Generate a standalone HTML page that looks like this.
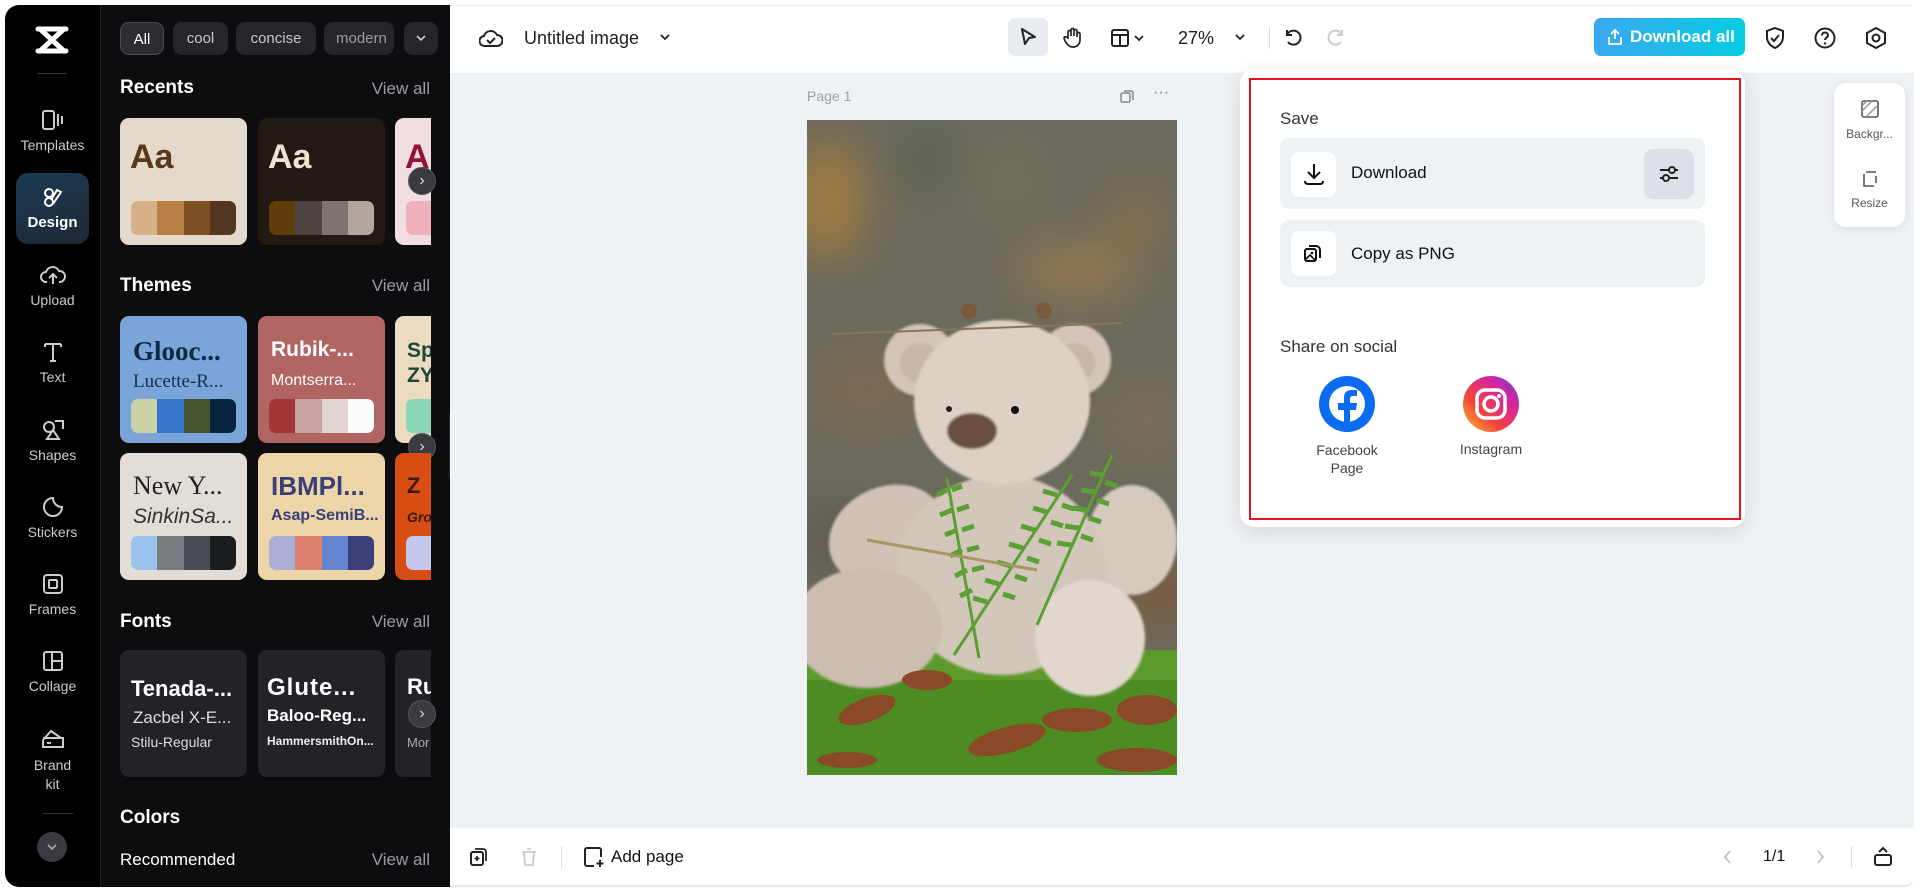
<!DOCTYPE html>
<html><head><meta charset="utf-8"><style>
*{box-sizing:border-box;margin:0;padding:0}
body{width:1920px;height:893px;overflow:hidden;background:#fff;font-family:"Liberation Sans",sans-serif;position:relative}
.a{position:absolute}
.rail{left:5px;top:5px;width:95px;height:882px;background:#000;border-radius:14px 0 0 14px}
.panel{left:100px;top:5px;width:350px;height:882px;background:#0d0d0f;border-left:1px solid #1e1e22}
.ri{position:absolute;left:0;width:95px;text-align:center;color:#c9cbd0;font-size:14px}
.ri svg{display:block;margin:0 auto 6px}
.chip{position:absolute;top:22px;height:33px;border-radius:9px;background:#25262a;color:#c5c7cc;font-size:15px;line-height:33px;text-align:center}
.ttl{position:absolute;left:120px;color:#fff;font-weight:bold;font-size:19px}
.va{position:absolute;right:1490px;color:#9a9ca3;font-size:17px}
.card{position:absolute;width:127px;height:127px;border-radius:9px;overflow:hidden}
.sw{position:absolute;left:11px;right:11px;bottom:10px;height:34px;border-radius:7px;overflow:hidden;display:flex}
.sw i{flex:1}
.arr{position:absolute;width:28px;height:28px;border-radius:50%;background:#3a3b40;border:1px solid #55565c;color:#ddd;font-size:16px;line-height:25px;text-align:center}
.tb{color:#1d1e22}
</style></head><body>
<div class="a rail">
  <svg class="a" style="left:30px;top:20px" width="34" height="30" viewBox="0 0 34 30"><path d="M3 4h28M3 26h28M5 4l24 22M29 4L5 26" stroke="#fff" stroke-width="5" fill="none" stroke-linecap="round"/></svg>
  <div class="a" style="left:32px;top:68px;width:30px;height:1px;background:#333"></div>
  <div class="ri" style="top:104px"><svg width="24" height="22" viewBox="0 0 24 22"><rect x="2" y="2" width="11" height="18" rx="2" fill="none" stroke="#ccc" stroke-width="2"/><path d="M17 5v12M21 7v8" stroke="#ccc" stroke-width="2"/></svg>Templates</div>
  <div class="a" style="left:11px;top:168px;width:73px;height:71px;border-radius:12px;background:linear-gradient(160deg,#1b3a55,#1e2833)"></div>
  <div class="ri" style="top:181px;color:#fff;font-weight:bold;font-size:15px"><svg width="24" height="22" viewBox="0 0 24 22"><circle cx="8" cy="7" r="4" fill="none" stroke="#fff" stroke-width="2"/><circle cx="8" cy="16" r="4" fill="none" stroke="#fff" stroke-width="2"/><path d="M12 18l8-12-4-2-6 10" fill="none" stroke="#fff" stroke-width="2"/></svg>Design</div>
  <div class="ri" style="top:259px"><svg width="26" height="22" viewBox="0 0 26 22"><path d="M7 18H6a5 5 0 010-10 7 7 0 0113-1 5 5 0 011 11h-1M13 20v-9M9 14l4-4 4 4" fill="none" stroke="#ccc" stroke-width="2"/></svg>Upload</div>
  <div class="ri" style="top:336px"><svg width="24" height="22" viewBox="0 0 24 22"><path d="M4 3h16M12 3v17M4 3v3M20 3v3M9 20h6" stroke="#ccc" stroke-width="2" fill="none"/></svg>Text</div>
  <div class="ri" style="top:414px"><svg width="24" height="22" viewBox="0 0 24 22"><circle cx="8" cy="8" r="5" fill="none" stroke="#ccc" stroke-width="2"/><path d="M14 2h8v8M6 20l6-9 6 9z" fill="none" stroke="#ccc" stroke-width="2"/></svg>Shapes</div>
  <div class="ri" style="top:491px"><svg width="24" height="22" viewBox="0 0 24 22"><path d="M12 2a9 9 0 109 9c-5 0-9-4-9-9z" fill="none" stroke="#ccc" stroke-width="2"/></svg>Stickers</div>
  <div class="ri" style="top:568px"><svg width="24" height="22" viewBox="0 0 24 22"><rect x="3" y="2" width="18" height="18" rx="3" fill="none" stroke="#ccc" stroke-width="2"/><rect x="8" y="7" width="8" height="8" rx="1" fill="none" stroke="#ccc" stroke-width="2"/></svg>Frames</div>
  <div class="ri" style="top:645px"><svg width="24" height="22" viewBox="0 0 24 22"><rect x="3" y="2" width="18" height="18" rx="2" fill="none" stroke="#ccc" stroke-width="2"/><path d="M11 2v18M11 11h10" stroke="#ccc" stroke-width="2"/></svg>Collage</div>
  <div class="ri" style="top:723px;line-height:19px"><svg width="26" height="22" viewBox="0 0 26 22"><path d="M3 12l8-9 10 7M3 12v7h20v-9H3" fill="none" stroke="#ccc" stroke-width="2"/><path d="M7 15h4" stroke="#ccc" stroke-width="2"/></svg>Brand<br>kit</div>
  <div class="a" style="left:38px;top:808px;width:30px;height:1px;background:#333"></div>
  <div class="a" style="left:32px;top:827px;width:30px;height:30px;border-radius:50%;background:#3a3b40"></div>
  <svg class="a" style="left:40px;top:836px" width="14" height="12" viewBox="0 0 14 12"><path d="M3 4l4 4 4-4" fill="none" stroke="#aaa" stroke-width="1.6"/></svg>
</div>
<div class="a panel"></div>
<div class="chip" style="left:120px;width:44px;background:#2c2d31;border:1px solid #4a4b50;color:#fff">All</div>
<div class="chip" style="left:173px;width:55px">cool</div>
<div class="chip" style="left:236px;width:80px">concise</div>
<div class="chip" style="left:324px;width:70px;text-align:left;padding-left:12px;overflow:hidden;color:#9a9ca3">modern</div>
<div class="chip" style="left:404px;width:34px"></div>
<svg class="a" style="left:414px;top:32px" width="14" height="12" viewBox="0 0 14 12"><path d="M3 4l4 4 4-4" fill="none" stroke="#ccc" stroke-width="1.6"/></svg>
<div class="ttl" style="top:77px">Recents</div><div class="va" style="top:79px">View all</div>
<div class="card" style="left:120px;top:118px;background:#e5d9cd"><div class="a" style="left:10px;top:20px;font-size:34px;font-weight:bold;color:#5a3719">Aa</div><div class="sw"><i style="background:#d6b189"></i><i style="background:#b98146"></i><i style="background:#7f4f24"></i><i style="background:#533520"></i></div></div>
<div class="card" style="left:258px;top:118px;background:#211a13"><div class="a" style="left:10px;top:20px;font-size:34px;font-weight:bold;color:#ede2d4">Aa</div><div class="sw"><i style="background:#603c09"></i><i style="background:#4c4440"></i><i style="background:#7d746e"></i><i style="background:#b1a79f"></i></div></div>
<div class="card" style="left:395px;top:118px;width:36px;background:#f2dde1;border-radius:9px 0 0 9px"><div class="a" style="left:10px;top:20px;font-size:34px;font-weight:bold;color:#8f1634">A</div><div class="sw" style="right:0;border-radius:7px 0 0 7px"><i style="background:#eeb0bb"></i></div></div>
<div class="arr" style="left:408px;top:167px">›</div>
<div class="ttl" style="top:275px">Themes</div><div class="va" style="top:276px">View all</div>
<div class="card" style="left:120px;top:316px;background:#7ba4d9"><div class="a" style="left:13px;top:20px;font-size:27px;font-weight:bold;font-family:'Liberation Serif',serif;color:#0e2a40">Glooc...</div><div class="a" style="left:13px;top:55px;font-size:19px;font-family:'Liberation Serif',serif;color:#17324a">Lucette-R...</div><div class="sw"><i style="background:#cbd3a6"></i><i style="background:#3576c9"></i><i style="background:#485531"></i><i style="background:#07243f"></i></div></div>
<div class="card" style="left:258px;top:316px;background:#b16563"><div class="a" style="left:13px;top:22px;font-size:21px;font-weight:bold;color:#fff">Rubik-...</div><div class="a" style="left:13px;top:56px;font-size:16px;color:#fff">Montserra...</div><div class="sw"><i style="background:#a53435"></i><i style="background:#c8a3a3"></i><i style="background:#e1d5d3"></i><i style="background:#fbfdfd"></i></div></div>
<div class="card" style="left:395px;top:316px;width:36px;background:#ebdcc1;border-radius:9px 0 0 9px"><div class="a" style="left:12px;top:22px;font-size:21px;font-weight:bold;color:#1f4536;line-height:25px">Sp<br>ZY</div><div class="sw" style="right:0;border-radius:7px 0 0 7px"><i style="background:#87d7b6"></i></div></div>
<div class="arr" style="left:408px;top:433px">›</div>
<div class="card" style="left:120px;top:453px;background:#e2ddd7"><div class="a" style="left:13px;top:18px;font-size:26px;font-family:'Liberation Serif',serif;color:#222">New Y...</div><div class="a" style="left:13px;top:52px;font-size:21px;font-style:italic;color:#333">SinkinSa...</div><div class="sw"><i style="background:#9ac4ed"></i><i style="background:#777a7e"></i><i style="background:#484b52"></i><i style="background:#1a1c20"></i></div></div>
<div class="card" style="left:258px;top:453px;background:#ecd6a9"><div class="a" style="left:13px;top:18px;font-size:26px;font-weight:bold;color:#3a3f78">IBMPl...</div><div class="a" style="left:13px;top:54px;font-size:16px;font-weight:bold;color:#3a3f78">Asap-SemiB...</div><div class="sw"><i style="background:#abafd6"></i><i style="background:#dd8070"></i><i style="background:#6685d0"></i><i style="background:#3c407a"></i></div></div>
<div class="card" style="left:395px;top:453px;width:36px;background:#d84d12;border-radius:9px 0 0 9px"><div class="a" style="left:12px;top:20px;font-size:22px;font-weight:bold;color:#3a1a10">Z</div><div class="a" style="left:12px;top:56px;font-size:14px;font-weight:bold;font-style:italic;color:#3a1a10">Gro</div><div class="sw" style="right:0;border-radius:7px 0 0 7px"><i style="background:#c5c8ee"></i></div></div>
<div class="ttl" style="top:611px">Fonts</div><div class="va" style="top:612px">View all</div>
<div class="card" style="left:120px;top:650px;background:#222327"><div class="a" style="left:11px;top:26px;font-size:22px;font-weight:bold;color:#fff">Tenada-...</div><div class="a" style="left:13px;top:58px;font-size:17px;color:#ddd">Zacbel X-E...</div><div class="a" style="left:11px;top:84px;font-size:14px;color:#ddd">Stilu-Regular</div></div>
<div class="card" style="left:258px;top:650px;background:#222327"><div class="a" style="left:9px;top:24px;font-size:24px;font-weight:bold;color:#fff;letter-spacing:1px">Glute...</div><div class="a" style="left:9px;top:56px;font-size:17px;font-weight:bold;color:#fff">Baloo-Reg...</div><div class="a" style="left:9px;top:84px;font-size:12px;color:#eee;font-weight:bold">HammersmithOn...</div></div>
<div class="card" style="left:395px;top:650px;width:36px;background:#222327;border-radius:9px 0 0 9px"><div class="a" style="left:12px;top:24px;font-size:22px;font-weight:bold;color:#fff">Ru</div><div class="a" style="left:12px;top:85px;font-size:13px;color:#aaa">Mor</div></div>
<div class="arr" style="left:408px;top:700px">›</div>
<div class="ttl" style="top:807px">Colors</div>
<div class="a" style="left:120px;top:850px;color:#fff;font-size:17px">Recommended</div><div class="va" style="top:850px">View all</div>
<div class="a" style="left:449px;top:414px;width:8px;height:64px;background:#2a2b2f;border-radius:0 8px 8px 0"></div>

<div class="a" style="left:450px;top:5px;width:1464px;height:68px;background:#fff;border-top:1px solid #eee"></div>
<div class="a" style="left:450px;top:73px;width:1464px;height:755px;background:#eff2f5"></div>
<div class="a" style="left:450px;top:828px;width:1464px;height:59px;background:#fff;border-bottom:2px solid #e6e8eb;border-radius:0 0 10px 0"></div>

<svg class="a" style="left:479px;top:27px" width="24" height="22" viewBox="0 0 24 22"><path d="M6 19a5 5 0 01-1-10 7 7 0 0113-1 5 5 0 010 11z M8 13l3 3 5-5" fill="none" stroke="#222" stroke-width="2"/></svg>
<div class="a tb" style="left:524px;top:28px;font-size:18px">Untitled image</div>
<svg class="a" style="left:658px;top:31px" width="14" height="12" viewBox="0 0 14 12"><path d="M3 4l4 4 4-4" fill="none" stroke="#222" stroke-width="1.8"/></svg>
<div class="a" style="left:1008px;top:18px;width:40px;height:38px;border-radius:7px;background:#e8ebef"></div>
<svg class="a" style="left:1018px;top:27px" width="20" height="20" viewBox="0 0 20 20"><path d="M4 2l13 8-6 1-4 6z" fill="none" stroke="#222" stroke-width="2" stroke-linejoin="round"/></svg>
<svg class="a" style="left:1062px;top:26px" width="22" height="22" viewBox="0 0 22 22"><path d="M6 12V6a1.5 1.5 0 013 0v4V4a1.5 1.5 0 013 0v6V5a1.5 1.5 0 013 0v6-3a1.5 1.5 0 013 0v6c0 4-3 7-7 7s-6-3-8-6l-1-3a1.3 1.3 0 012-1z" fill="none" stroke="#222" stroke-width="1.7"/></svg>
<svg class="a" style="left:1110px;top:28px" width="20" height="20" viewBox="0 0 20 20"><rect x="2" y="2" width="16" height="16" rx="2" fill="none" stroke="#222" stroke-width="2"/><path d="M2 7h16M10 7v11" stroke="#222" stroke-width="2"/></svg>
<svg class="a" style="left:1132px;top:32px" width="14" height="12" viewBox="0 0 14 12"><path d="M3 4l4 4 4-4" fill="none" stroke="#222" stroke-width="1.8"/></svg>
<div class="a tb" style="left:1178px;top:28px;font-size:18px">27%</div>
<svg class="a" style="left:1233px;top:31px" width="14" height="12" viewBox="0 0 14 12"><path d="M3 4l4 4 4-4" fill="none" stroke="#222" stroke-width="1.8"/></svg>
<div class="a" style="left:1269px;top:27px;width:1px;height:22px;background:#ddd"></div>
<svg class="a" style="left:1282px;top:27px" width="20" height="20" viewBox="0 0 20 20"><path d="M5 3v5h5M5 8a7 7 0 111 7" fill="none" stroke="#222" stroke-width="2"/></svg>
<svg class="a" style="left:1327px;top:27px" width="20" height="20" viewBox="0 0 20 20"><path d="M15 3v5h-5M15 8a7 7 0 10-1 7" fill="none" stroke="#ccc" stroke-width="2"/></svg>
<div class="a" style="left:1594px;top:18px;width:151px;height:38px;border-radius:7px;background:linear-gradient(90deg,#3aa7f0,#05cde0);color:#fff;font-weight:bold;font-size:17px;line-height:38px;padding-left:36px">Download all</div>
<svg class="a" style="left:1606px;top:28px" width="18" height="18" viewBox="0 0 18 18"><path d="M9 2v9M5 6l4-4 4 4M3 9v7h12V9" fill="none" stroke="#fff" stroke-width="1.8"/></svg>
<svg class="a" style="left:1763px;top:26px" width="24" height="24" viewBox="0 0 24 24"><path d="M12 2l8 3v6c0 6-4 9-8 11-4-2-8-5-8-11V5z M8 12l3 3 5-6" fill="none" stroke="#222" stroke-width="2"/></svg>
<svg class="a" style="left:1813px;top:26px" width="24" height="24" viewBox="0 0 24 24"><circle cx="12" cy="12" r="9.5" fill="none" stroke="#222" stroke-width="2"/><path d="M9 9.5a3 3 0 116 0c0 2-3 2-3 4.5" fill="none" stroke="#222" stroke-width="2"/><circle cx="12" cy="17.5" r="1.2" fill="#222"/></svg>
<svg class="a" style="left:1864px;top:26px" width="24" height="24" viewBox="0 0 24 24"><path d="M12 2l9 5v10l-9 5-9-5V7z" fill="none" stroke="#222" stroke-width="2"/><circle cx="12" cy="12" r="3.5" fill="none" stroke="#222" stroke-width="2"/></svg>

<div class="a" style="left:807px;top:88px;color:#9a9ea6;font-size:14px">Page 1</div>
<svg class="a" style="left:1119px;top:88px" width="16" height="16" viewBox="0 0 16 16"><rect x="2" y="5" width="9" height="9" rx="1.5" fill="none" stroke="#888" stroke-width="1.5"/><path d="M5 3h7a2 2 0 012 2v7" fill="none" stroke="#888" stroke-width="1.5"/></svg>
<div class="a" style="left:1153px;top:84px;color:#888;font-size:16px">···</div>

<svg class="a" style="left:807px;top:120px" width="370" height="655" viewBox="0 0 370 655">
<defs><filter id="b"><feGaussianBlur stdDeviation="20"/></filter><filter id="s"><feGaussianBlur stdDeviation="1.2"/></filter></defs>
<rect width="370" height="655" fill="#6c6a5c"/>
<g filter="url(#b)" opacity=".8">
<ellipse cx="20" cy="80" rx="40" ry="60" fill="#a57d3c"/><ellipse cx="270" cy="150" rx="60" ry="30" fill="#9a7a50"/><circle cx="330" cy="100" r="30" fill="#8a7048"/><circle cx="120" cy="40" r="40" fill="#5f6552"/><ellipse cx="60" cy="270" rx="60" ry="40" fill="#7d6a52"/><circle cx="340" cy="300" r="40" fill="#7a6e5e"/><circle cx="200" cy="60" r="40" fill="#72705e"/><circle cx="30" cy="420" r="40" fill="#5f5a50"/><circle cx="350" cy="470" r="40" fill="#7a5a3e"/>
</g>
<rect y="530" width="370" height="125" fill="#5c9a2a"/>
<rect y="560" width="370" height="95" fill="#4c8c22"/>
<g filter="url(#s)">
<ellipse cx="325" cy="420" rx="45" ry="55" fill="#d6c9bd"/>
<ellipse cx="80" cy="415" rx="60" ry="48" fill="#d0c3b6" transform="rotate(-25 80 415)"/>
<ellipse cx="195" cy="455" rx="105" ry="100" fill="#d3c6ba"/>
<ellipse cx="60" cy="508" rx="75" ry="60" fill="#cbbdb0"/>
<ellipse cx="283" cy="518" rx="55" ry="58" fill="#e2d7cd"/>
<circle cx="113" cy="240" r="36" fill="#d3c5b8"/><circle cx="268" cy="240" r="36" fill="#d3c5b8"/>
<circle cx="113" cy="243" r="20" fill="#c6b7a8"/><circle cx="268" cy="243" r="20" fill="#c6b7a8"/>
<ellipse cx="195" cy="282" rx="88" ry="82" fill="#ddd1c5"/>
<ellipse cx="165" cy="311" rx="25" ry="18" fill="#6b5040"/>
</g>
<circle cx="142" cy="289" r="3" fill="#222"/><circle cx="208" cy="290" r="4" fill="#111"/>
<path d="M25 214L315 203" stroke="#8a7458" stroke-width="2"/>
<circle cx="162" cy="191" r="8" fill="#7a5a3a"/><circle cx="237" cy="191" r="8" fill="#7a5a3a"/>
<g stroke="#5aa032" stroke-width="3" fill="none">
<path d="M140 358l32 180M305 335l-75 170M265 355l-118 180"/>
<path d="M140 370l-10 5M145 390l-12 5M150 410l-12 5M155 430l-12 6M160 450l-12 6M165 470l-12 6M145 370l10-4M150 390l12-4M155 410l12-4M160 430l12-3M165 450l12-3" stroke-width="5"/>
<path d="M295 355l-12-2M288 372l-14-2M280 390l-14-2M272 408l-14-2M264 425l-14-2M298 362l12 4M290 380l12 4M282 398l12 4M274 416l12 4" stroke-width="5"/>
<path d="M250 375l-14-4M240 392l-14-4M228 410l-14-4M216 428l-14-4M204 446l-14-4M192 464l-14-4M180 482l-14-4M255 385l12 4M244 402l12 4M232 420l12 4M220 438l12 4M208 456l12 4M196 474l12 4" stroke-width="5"/>
</g>
<path d="M60 420L230 450" stroke="#a89564" stroke-width="3"/>
<g fill="#8a4a28"><ellipse cx="60" cy="590" rx="30" ry="12" transform="rotate(-20 60 590)"/><ellipse cx="200" cy="620" rx="40" ry="13" transform="rotate(-15 200 620)"/><ellipse cx="270" cy="600" rx="35" ry="12"/><ellipse cx="340" cy="590" rx="30" ry="15"/><ellipse cx="330" cy="640" rx="40" ry="12"/><ellipse cx="120" cy="560" rx="25" ry="10"/><ellipse cx="40" cy="640" rx="30" ry="8"/></g>
</svg>

<div class="a" style="left:1834px;top:83px;width:71px;height:144px;background:#fff;border-radius:12px;box-shadow:0 2px 10px rgba(0,0,0,.08)"></div>
<svg class="a" style="left:1860px;top:99px" width="20" height="20" viewBox="0 0 20 20"><rect x="2" y="2" width="16" height="16" rx="2" fill="none" stroke="#555" stroke-width="1.6"/><path d="M2 12L12 2M6 18L18 6M2 7l5-5" stroke="#999" stroke-width="1.5"/></svg>
<div class="a" style="left:1834px;top:127px;width:71px;text-align:center;font-size:12px;color:#555">Backgr...</div>
<svg class="a" style="left:1860px;top:169px" width="20" height="20" viewBox="0 0 20 20"><path d="M4 5v12h10M16 7v7M6 3h10" fill="none" stroke="#555" stroke-width="1.6"/></svg>
<div class="a" style="left:1834px;top:196px;width:71px;text-align:center;font-size:12px;color:#555">Resize</div>

<div class="a" style="left:1240px;top:69px;width:505px;height:458px;background:#fff;border-radius:14px;box-shadow:0 4px 20px rgba(0,0,0,.12)"></div>
<div class="a" style="left:1249px;top:78px;width:492px;height:442px;border:2px solid #e3141e"></div>
<div class="a" style="left:1280px;top:109px;font-size:17px;color:#333">Save</div>
<div class="a" style="left:1280px;top:138px;width:425px;height:71px;background:#eff2f5;border-radius:9px"></div>
<div class="a" style="left:1291px;top:152px;width:45px;height:45px;background:#fff;border-radius:8px"></div>
<svg class="a" style="left:1302px;top:162px" width="24" height="24" viewBox="0 0 24 24"><path d="M12 2v14M6 10l6 6 6-6M3 19c0 2 1 3 3 3h12c2 0 3-1 3-3" fill="none" stroke="#111" stroke-width="2"/></svg>
<div class="a" style="left:1351px;top:163px;font-size:17px;color:#111">Download</div>
<div class="a" style="left:1644px;top:149px;width:50px;height:50px;background:#dde1e7;border-radius:9px"></div>
<svg class="a" style="left:1658px;top:163px" width="22" height="22" viewBox="0 0 22 22"><path d="M2 7h18M2 15h18" stroke="#222" stroke-width="2"/><circle cx="14" cy="7" r="3" fill="#dde1e7" stroke="#222" stroke-width="2"/><circle cx="8" cy="15" r="3" fill="#dde1e7" stroke="#222" stroke-width="2"/></svg>
<div class="a" style="left:1280px;top:220px;width:425px;height:67px;background:#eff2f5;border-radius:9px"></div>
<div class="a" style="left:1291px;top:231px;width:45px;height:45px;background:#fff;border-radius:8px"></div>
<svg class="a" style="left:1303px;top:243px" width="20" height="20" viewBox="0 0 20 20"><rect x="2" y="6" width="11" height="12" rx="2" fill="none" stroke="#111" stroke-width="2"/><path d="M6 3h7a4 4 0 014 4v8" fill="none" stroke="#111" stroke-width="2"/><path d="M3 16l4-4 5 5" fill="none" stroke="#111" stroke-width="1.6"/><circle cx="9" cy="10" r="1.3" fill="#111"/></svg>
<div class="a" style="left:1351px;top:244px;font-size:17px;color:#111">Copy as PNG</div>
<div class="a" style="left:1280px;top:337px;font-size:17px;color:#333">Share on social</div>
<svg class="a" style="left:1319px;top:376px" width="56" height="56" viewBox="0 0 56 56"><circle cx="28" cy="28" r="28" fill="#0b6cf2"/><circle cx="28" cy="28" r="18" fill="#fff"/><path d="M31 56V34h6l1-7h-7v-4c0-2 1-3 3-3h4v-6h-5c-6 0-8 3-8 8v5h-6v7h6v22z" fill="#0b6cf2"/></svg>
<div class="a" style="left:1297px;top:441px;width:100px;text-align:center;font-size:14px;color:#444;line-height:18px">Facebook<br>Page</div>
<svg class="a" style="left:1463px;top:376px" width="56" height="56" viewBox="0 0 56 56"><defs><linearGradient id="ig" x1="0" y1="1" x2="1" y2="0"><stop offset="0" stop-color="#fdc52a"/><stop offset=".35" stop-color="#f0463a"/><stop offset=".7" stop-color="#d6249f"/><stop offset="1" stop-color="#6a3fd6"/></linearGradient></defs><circle cx="28" cy="28" r="28" fill="url(#ig)"/><rect x="14" y="14" width="28" height="28" rx="8" fill="none" stroke="#fff" stroke-width="3.5"/><circle cx="28" cy="28" r="7" fill="none" stroke="#fff" stroke-width="3.5"/><circle cx="36" cy="20" r="2" fill="#fff"/></svg>
<div class="a" style="left:1441px;top:441px;width:100px;text-align:center;font-size:14px;color:#444">Instagram</div>

<svg class="a" style="left:469px;top:847px" width="20" height="20" viewBox="0 0 20 20"><rect x="2" y="5" width="12" height="13" rx="2" fill="none" stroke="#222" stroke-width="2"/><path d="M6 2h8a3 3 0 013 3v9M8 9v5M5.5 11.5h5" fill="none" stroke="#222" stroke-width="1.8"/></svg>
<svg class="a" style="left:520px;top:847px" width="18" height="20" viewBox="0 0 18 20"><path d="M2 5h14M7 2h4M4 5l1 13h8l1-13" fill="none" stroke="#ccc" stroke-width="1.8"/></svg>
<div class="a" style="left:561px;top:846px;width:1px;height:22px;background:#ddd"></div>
<svg class="a" style="left:583px;top:846px" width="22" height="22" viewBox="0 0 22 22"><path d="M11 20H4a2 2 0 01-2-2V4a2 2 0 012-2h12a2 2 0 012 2v7M17 14v7M13.5 17.5h7" fill="none" stroke="#222" stroke-width="2"/></svg>
<div class="a" style="left:611px;top:847px;font-size:17px;color:#111">Add page</div>
<svg class="a" style="left:1722px;top:849px" width="12" height="16" viewBox="0 0 12 16"><path d="M8 2L3 8l5 6" fill="none" stroke="#bbb" stroke-width="1.6"/></svg>
<div class="a" style="left:1763px;top:848px;font-size:16px;color:#111">1/1</div>
<svg class="a" style="left:1814px;top:849px" width="12" height="16" viewBox="0 0 12 16"><path d="M4 2l5 6-5 6" fill="none" stroke="#bbb" stroke-width="1.6"/></svg>
<div class="a" style="left:1851px;top:846px;width:1px;height:22px;background:#ddd"></div>
<svg class="a" style="left:1873px;top:845px" width="20" height="22" viewBox="0 0 20 22"><rect x="2" y="10" width="16" height="10" rx="2" fill="none" stroke="#222" stroke-width="2"/><path d="M6 7l4-4 4 4" fill="none" stroke="#222" stroke-width="2"/></svg>
</body></html>
